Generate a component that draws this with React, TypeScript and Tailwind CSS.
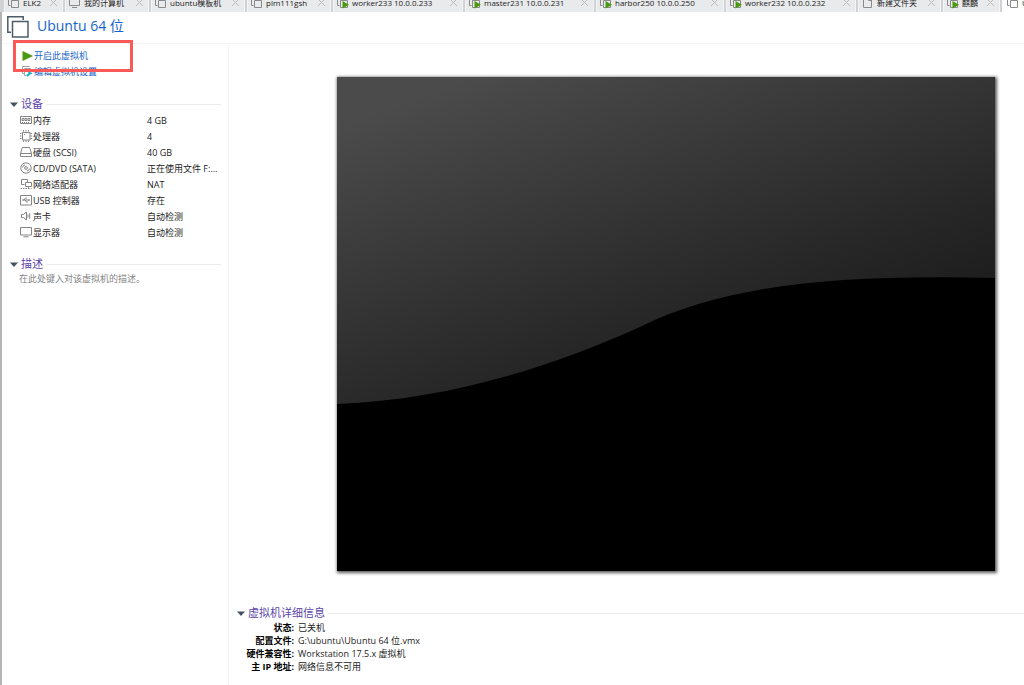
import type { ReactNode } from "react";
import clsx from "clsx";

type TabKind = "off" | "running" | "computer" | "folder";

const tabs: { title: string; kind: TabKind; width: string }[] = [
  { title: "ELK2", kind: "off", width: "w-[59px]" },
  { title: "我的计算机", kind: "computer", width: "w-[84px]" },
  { title: "ubuntu模板机", kind: "off", width: "w-[94px]" },
  { title: "plm111gsh", kind: "off", width: "w-[84px]" },
  { title: "worker233 10.0.0.233", kind: "running", width: "w-[130px]" },
  { title: "master231 10.0.0.231", kind: "running", width: "w-[129px]" },
  { title: "harbor250 10.0.0.250", kind: "running", width: "w-[128px]" },
  { title: "worker232 10.0.0.232", kind: "running", width: "w-[130px]" },
  { title: "新建文件夹", kind: "folder", width: "w-[83px]" },
  { title: "麒麟", kind: "running", width: "w-[57px]" },
];

const devices: { name: string; value: string; icon: ReactNode }[] = [
  {
    name: "内存",
    value: "4 GB",
    icon: (
      <>
        <path d="M.5 2.5h11v7H.5z" />
        <path d="M2 4.5h2v2H2zM5 4.5h2v2H5zM8 4.5h2v2H8zM2.5 8v1.5M4.5 8v1.5M6.5 8v1.5M8.5 8v1.5" />
      </>
    ),
  },
  {
    name: "处理器",
    value: "4",
    icon: (
      <>
        <path d="M2.500 2.500h7.500v7.500h-7.500z" />
        <path
          d="M3.500 0v1.500M6 0v1.500M8.500 0v1.500M3.500 10.500V12M6 10.500V12M8.500 10.500V12M0 3.500h1.500M0 6h1.500M0 8.500h1.500M10.500 3.500H12M10.500 6H12M10.500 8.500H12M4 4.500h1"
        />
      </>
    ),
  },
  {
    name: "硬盘 (SCSI)",
    value: "40 GB",
    icon: <path d="M.5 7.5h11v3H.5zM.5 7.5l1.8-6h7.4l1.8 6" />,
  },
  {
    name: "CD/DVD (SATA)",
    value: "正在使用文件 F:...",
    icon: (
      <>
        <circle cx="6" cy="6" r="5.2" />
        <circle cx="6" cy="6" r="1.4" />
        <path d="M2.5 5.5A3.5 3.5 0 0 1 5 2.8M9.5 6.5A3.5 3.5 0 0 1 7 9.2" />
      </>
    ),
  },
  {
    name: "网络适配器",
    value: "NAT",
    icon: (
      <>
        <path d="M4.5 6.5h-3v-5h6V4M5.5 4.5h6v4h-6zM8.500 8.500v2" />
        <path d="M.5 10.5h11" strokeDasharray="1.500 1" />
      </>
    ),
  },
  {
    name: "USB 控制器",
    value: "存在",
    icon: (
      <>
        <path d="M.5 1.5h11v9.5H.5z" />
        <path d="M2.5 6h7M4 6l1.5-2H7M5 6l1.5 2H8M8.5 5l1 1-1 1M3 5.2v1.6" />
      </>
    ),
  },
  {
    name: "声卡",
    value: "自动检测",
    icon: (
      <path d="M1.5 4.5h2l3-2.5v8l-3-2.5h-2zM8 4.5v3M9.7 3.2v5.6" />
    ),
  },
  {
    name: "显示器",
    value: "自动检测",
    icon: <path d="M.5 1.5h11v7.500H.5zM3.500 10.800h5" />,
  },
];

const details = [
  { label: "状态:", value: "已关机" },
  { label: "配置文件:", value: "G:\\ubuntu\\Ubuntu 64 位.vmx" },
  { label: "硬件兼容性:", value: "Workstation 17.5.x 虚拟机" },
  { label: "主 IP 地址:", value: "网络信息不可用" },
];

function TabIcon({ kind }: { kind: TabKind }) {
  return (
    <svg
      viewBox="0 0 12 12"
      className="size-3 shrink-0"
      fill="none"
      stroke="#8a8a8a"
      aria-hidden="true"
    >
      {kind === "computer" && <path d="M.5 1.5h10v7H.5zM3 10.500h5" />}
      {kind === "folder" && <path d="M1.5.5h5.500l2.500 2.500v7.500h-8zM6.500.5v3h3" />}
      {(kind === "off" || kind === "running") && (
        <path d="M2.500 8.500H.5v-7h7V3M3.500 3.500h7v7h-7z" />
      )}
      {kind === "running" && (
        <path d="M5.500 4v7.500L12 7.800z" fill="#4a9a10" stroke="none" />
      )}
    </svg>
  );
}

function Section({
  title,
  children,
}: {
  title: string;
  children: ReactNode;
}) {
  return (
    <section>
      <h2 className="flex h-4 items-center gap-[3px] text-[11px] text-[#5b45a8] leading-4">
        <svg viewBox="0 0 8 5" className="h-[5px] w-2" aria-hidden="true">
          <path d="M0 .5h8L4 5z" fill="#44545f" />
        </svg>
        {title}
        <span className="h-px flex-1 bg-[#ececec]" />
      </h2>
      {children}
    </section>
  );
}

function TabBar() {
  return (
    <div
      role="tablist"
      className="flex h-3 items-end gap-[2px] overflow-hidden bg-[#d0d2d5] pl-[4px] text-[8px] leading-[14px]"
    >
      {tabs.map((tab) => (
        <div
          key={tab.title}
          className={clsx(
            "flex h-[19px] shrink-0 items-center border-[#f4f4f5] border-x bg-[#e9eaec] pr-[5px] pl-[3px]",
            tab.width,
          )}
        >
          <button
            type="button"
            role="tab"
            aria-selected="false"
            className="flex flex-1 items-center gap-[3px] whitespace-nowrap"
          >
            <TabIcon kind={tab.kind} />
            {tab.title}
          </button>
          <button type="button" aria-label={`关闭 ${tab.title}`}>
            <svg
              viewBox="0 0 7 7"
              className="size-[7px]"
              stroke="#bcbcbc"
              aria-hidden="true"
            >
              <path d="M0 0l7 7M7 0L0 7" />
            </svg>
          </button>
        </div>
      ))}
      <button
        type="button"
        role="tab"
        aria-selected="true"
        className="flex h-[19px] flex-1 items-center gap-[3px] overflow-hidden whitespace-nowrap bg-white pl-[5px]"
      >
        <TabIcon kind="off" />
        Ubuntu 64 位
      </button>
    </div>
  );
}

function Sidebar() {
  return (
    <aside className="w-[227px] shrink-0 border-[#f3f3f3] border-r pt-1 pr-[7px] pl-2">
      <div className="relative flex flex-col items-start pl-[11px] text-[#1a66c8]">
        <button type="button" className="flex h-[15px] items-center gap-px">
          <svg viewBox="0 0 12 12" className="size-3" aria-hidden="true">
            <path d="M1.5 1v10L12 6z" fill="#4a9a10" />
          </svg>
          开启此虚拟机
        </button>
        <button type="button" className="flex h-4 items-center gap-px">
          <svg
            viewBox="0 0 12 12"
            className="size-3"
            fill="none"
            aria-hidden="true"
          >
            <path d="M3.500 8.500h-2v-7h7M3.500 3.500h6v2M3.500 3.500v7h2" stroke="#9aa3a9" />
            <path d="M6 11l3.500-3.500" stroke="#12aecb" strokeWidth="2" />
            <path d="M8 5.500a2 2 0 0 0 3 2.500" stroke="#12aecb" strokeWidth="1.5" />
          </svg>
          编辑虚拟机设置
        </button>
        <div className="pointer-events-none absolute -top-2 left-[3px] h-8 w-[120px] border-[#fb5858] border-[3px]" />
      </div>

      <div className="mt-[17px] flex flex-col gap-4">
        <Section title="设备">
          <table className="w-full table-fixed">
            <tbody>
              {devices.map((device) => (
                <tr key={device.name} className="h-4">
                  <th
                    scope="row"
                    className="w-[137px] p-0 pl-[10px] text-left font-normal"
                  >
                    <span className="flex items-center gap-px">
                      <svg
                        viewBox="0 0 12 12"
                        className="size-3"
                        fill="none"
                        stroke="#858585"
                        aria-hidden="true"
                      >
                        {device.icon}
                      </svg>
                      {device.name}
                    </span>
                  </th>
                  <td className="whitespace-nowrap p-0">{device.value}</td>
                </tr>
              ))}
            </tbody>
          </table>
        </Section>
        <Section title="描述">
          <textarea
            aria-label="描述"
            placeholder="在此处键入对该虚拟机的描述。"
            rows={4}
            className="block w-full resize-none pl-[9px] leading-[14px] placeholder:text-[#858585]"
          />
        </Section>
      </div>
    </aside>
  );
}

function Preview() {
  return (
    <svg
      viewBox="0 0 658 494"
      className="block w-full shadow-[1px_1px_3px_1px_rgba(0,0,0,0.65)]"
      role="img"
      aria-label="虚拟机屏幕"
    >
      <defs>
        <linearGradient
          id="glow"
          gradientUnits="userSpaceOnUse"
          x1="80"
          y1="20"
          x2="220"
          y2="405"
        >
          <stop offset="0" stopColor="#4b4b4b" />
          <stop offset="0.7" stopColor="#272727" />
          <stop offset="1" stopColor="#191919" />
        </linearGradient>
      </defs>
      <path d="M0 0h658v494H0z" fill="url(#glow)" />
      <path
        d="M0 327C105 323 205 294 303 250C388 207 505 197 658 201V494H0z"
        fill="#000"
      />
    </svg>
  );
}

export default function App() {
  return (
    <div className="flex min-h-screen flex-col bg-white font-['Open_Sans','Noto_Sans_CJK_SC',sans-serif] text-[#1c1c1c] text-[9px] leading-[13px]">
      <TabBar />
      <div className="flex flex-1 flex-col border-[#b4b4b4] border-l-2">
        <header className="flex h-8 items-center gap-2 border-[#f5f5f5] border-b pb-[2px] pl-[5px]">
          <svg
            viewBox="0 0 22 22"
            className="size-[22px]"
            fill="none"
            stroke="#4c5d69"
            strokeWidth="1.5"
            aria-hidden="true"
          >
            <path d="M4 16.200H.8V.8h15.400V4M5.500 5.500h15.500v15.500H5.500z" />
          </svg>
          <h1 className="pb-px text-[#1464c8] text-[14px] leading-5">
            Ubuntu 64 位
          </h1>
        </header>
        <div className="flex flex-1">
          <Sidebar />
          <main className="min-w-0 flex-1 pt-[33px] pl-2">
            <div className="mb-[34px] pr-[29px] pl-[100px]">
              <Preview />
            </div>
            <Section title="虚拟机详细信息">
              <dl className="grid grid-cols-[57px_1fr] gap-x-1 whitespace-nowrap">
                {details.map((row) => (
                  <div key={row.label} className="contents">
                    <dt className="text-right font-bold text-black">
                      {row.label}
                    </dt>
                    <dd>{row.value}</dd>
                  </div>
                ))}
              </dl>
            </Section>
          </main>
        </div>
      </div>
    </div>
  );
}
